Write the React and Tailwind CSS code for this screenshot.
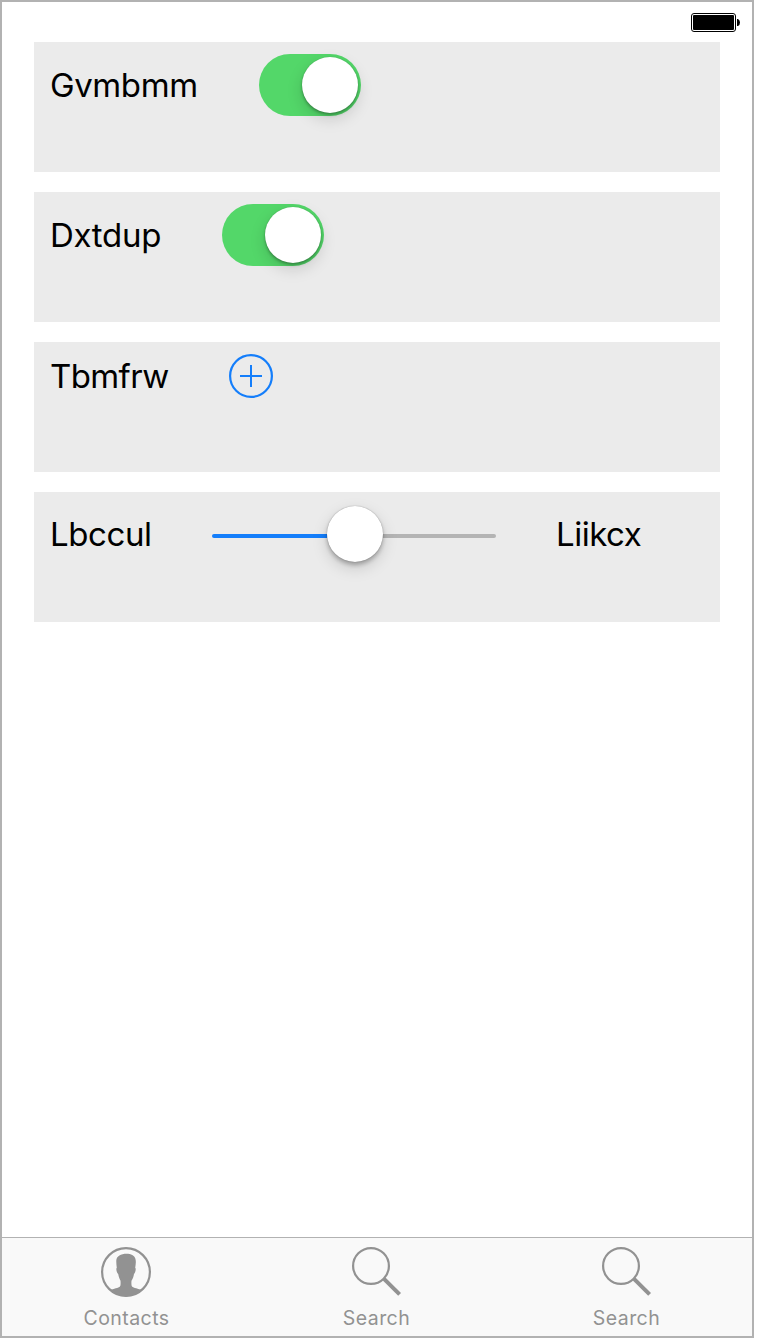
function Battery() {
  return (
    <svg width="50" height="20" viewBox="0 0 50 20" aria-hidden="true">
      <rect x="0.5" y="0.5" width="44" height="18" rx="2.5" fill="#fff" stroke="#000" />
      <rect x="2" y="2" width="41" height="15" rx="1" fill="#000" />
      <path d="M46 6h1q2 1 2 3.500t-2 3.500h-1z" fill="#000" />
    </svg>
  );
}

function Row({ children }) {
  return (
    <section className="flex h-[130px] items-start bg-[#ebebeb] pt-3 pl-4">
      <div className="flex items-center gap-[60px]">{children}</div>
    </section>
  );
}

function Label({ className, children }) {
  return (
    <span className={`block whitespace-nowrap text-[33px] leading-10 text-black ${className}`}>{children}</span>
  );
}

function Toggle() {
  return (
    <button
      role="switch"
      aria-checked="true"
      className="flex h-[62px] w-[102px] items-center justify-end rounded-full bg-[#53d769] pr-[3px]"
    >
      <span className="size-14 rounded-full bg-white shadow-[0_6px_16px_rgba(0,0,0,0.15),0_2px_3px_rgba(0,0,0,0.28),0_0_1px_rgba(0,0,0,0.2)]" />
    </button>
  );
}

function AddButton() {
  return (
    <button className="block size-11">
      <svg width="44" height="44" viewBox="0 0 44 44" fill="none" stroke="#147efb" strokeWidth="2">
        <circle cx="22" cy="22" r="20.900" strokeWidth="2.200" />
        <path d="M11 22h22M22 11v22" />
      </svg>
    </button>
  );
}

function Slider() {
  return (
    <div className="flex h-[60px] w-[284px] items-center">
      <div className="mt-1 h-1 w-[115px] rounded-l-full bg-[#147efb]" />
      <div className="z-10 size-14 rounded-full bg-white shadow-[0_6px_16px_rgba(0,0,0,0.15),0_3px_4px_rgba(0,0,0,0.25),0_0_1px_rgba(0,0,0,0.4)]" />
      <div className="mt-1 h-1 w-[113px] rounded-r-full bg-[#b4b4b4]" />
    </div>
  );
}

function ContactIcon() {
  return (
    <svg width="50" height="50" viewBox="0 0 50 50">
      <circle cx="25" cy="25" r="23.900" fill="none" stroke="#929292" strokeWidth="2.200" />
      <path
        d="M25.500 6.800C20 6.800 15.500 9.200 15.300 13.500C15.200 16 15.500 18.500 15.800 20.800C14.800 21.500 15.500 25.500 17.200 27C17.700 29.800 18.500 32 19.500 33.800C19.700 36.500 19.700 38.500 19 39.600C17.500 41.200 12.500 41.600 9 43.300A24.200 24.200 0 0 0 41 43.300C37.500 41.600 32.500 41.200 31 39.600C30.300 38.500 30.300 36.500 30.500 33.800C31.800 32 32.500 29.800 33 27C34.500 25.500 35.300 21.500 34.200 20.800C34.700 17.500 35.300 14.500 34.300 11.500C33.500 8.500 30 6.800 25.500 6.800Z"
        fill="#929292"
      />
    </svg>
  );
}

function SearchIcon() {
  return (
    <svg width="50" height="50" viewBox="0 0 50 50" fill="none" stroke="#929292">
      <circle cx="20" cy="19" r="17.900" strokeWidth="2.200" />
      <path d="M33 31.800 48.600 47.400" strokeWidth="4" />
    </svg>
  );
}

function Tab({ icon, label }) {
  return (
    <button className="flex w-[250px] flex-col items-center pt-[9px]">
      {icon}
      <span className="mt-[9px] pl-px text-[19.500px] leading-6 tracking-[0.45px] text-[#929292]">{label}</span>
    </button>
  );
}

export default function App() {
  return (
    <div className="h-[1340px] w-[760px] bg-white font-['Inter',sans-serif]">
      <div className="flex h-[1338px] w-[754px] flex-col border-2 border-[#b2b2b2] bg-white">
        <header className="flex h-10 shrink-0 justify-end pt-[11px] pr-[11px]">
          <Battery />
        </header>
        <main className="flex grow flex-col gap-5 px-8">
          <Row>
            <Label className="w-[149px] tracking-[-0.4px]">Gvmbmm</Label>
            <Toggle />
          </Row>
          <Row>
            <Label className="w-[112px] tracking-[-0.3px]">Dxtdup</Label>
            <Toggle />
          </Row>
          <Row>
            <Label className="w-[119px] tracking-[-0.6px]">Tbmfrw</Label>
            <AddButton />
          </Row>
          <Row>
            <Label className="w-[102px] tracking-[-0.4px]">Lbccul</Label>
            <Slider />
            <Label className="w-[86px] tracking-[-0.5px]">Liikcx</Label>
          </Row>
        </main>
        <nav className="h-[99px] shrink-0 border-t border-[#b2b2b2] bg-[#f9f9f9]">
          <div className="-ml-px flex">
            <Tab icon={<ContactIcon />} label="Contacts" />
            <Tab icon={<SearchIcon />} label="Search" />
            <Tab icon={<SearchIcon />} label="Search" />
          </div>
        </nav>
      </div>
    </div>
  );
}
